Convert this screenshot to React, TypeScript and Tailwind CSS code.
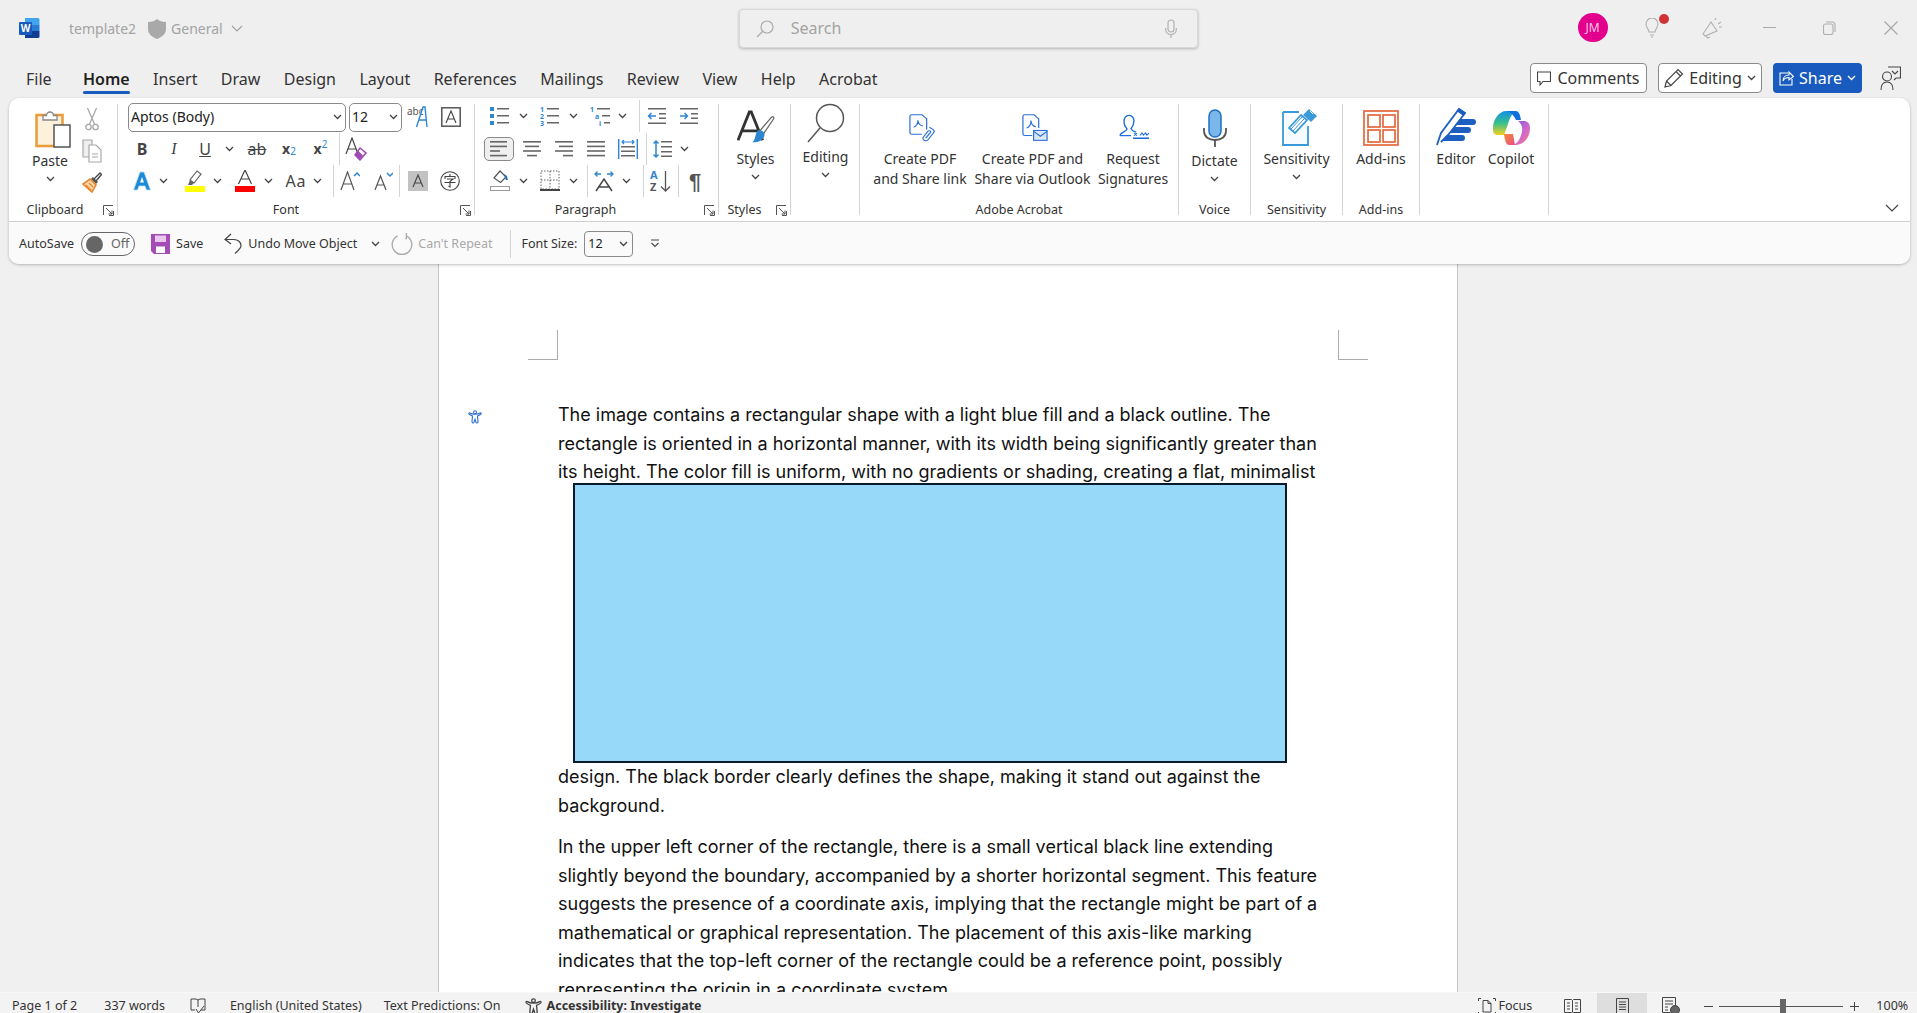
import React from "react";

const Chev = ({ c = "#444" }: { c?: string }) => (
  <svg width="9" height="6" viewBox="0 0 9 6" fill="none" stroke={c} strokeWidth="1.3"><path d="M1 1l3.500 3.500L8 1" /></svg>
);

const Launcher = () => (
  <svg width="11" height="11" viewBox="0 0 11 11" fill="none" stroke="#555" strokeWidth="1"><path d="M.5 10V.5H10M10.500 6v4.500H6M3 3l6 6M9 5.500V9H5.500" /></svg>
);

const Lines = ({ rows }: { rows: [number, number][] }) => (
  <>{rows.map(([x, w], i) => <rect key={i} x={x} y={3 + i * 4.6} width={w} height="1.6" fill="#666" />)}</>
);

const Align = ({ rows }: { rows: [number, number][] }) => (
  <svg width="20" height="22" viewBox="0 0 20 22"><Lines rows={rows} /></svg>
);

function Bullets() {
  return (
    <svg width="20" height="20" viewBox="0 0 20 20">
      <path d="M0 1h4v4H0zM0 8h4v4H0zM0 15h4v4H0z" fill="#2e86d0" />
      <path d="M7 2h12v1.500H7zM7 9h12v1.500H7zM7 16h12v1.500H7z" fill="#666" />
    </svg>
  );
}

function Numbered() {
  return (
    <svg width="20" height="22" viewBox="0 0 20 22">
      <text x="0" y="7" fontSize="7" fontWeight="700" fill="#2e86d0">1</text>
      <text x="0" y="14" fontSize="7" fontWeight="700" fill="#2e86d0">2</text>
      <text x="0" y="21" fontSize="7" fontWeight="700" fill="#2e86d0">3</text>
      <path d="M7 3h12v1.500H7zM7 10h12v1.500H7zM7 17h12v1.500H7z" fill="#666" />
    </svg>
  );
}

function Multilevel() {
  return (
    <svg width="22" height="22" viewBox="0 0 22 22">
      <text x="0" y="7" fontSize="7" fontWeight="700" fill="#2e86d0">1</text>
      <text x="5" y="14" fontSize="7" fontWeight="700" fill="#2e86d0">a</text>
      <text x="9" y="21" fontSize="7" fontWeight="700" fill="#2e86d0">i</text>
      <path d="M7 3h13v1.500H7zM12 10h8v1.500h-8zM14 17h6v1.500h-6z" fill="#666" />
    </svg>
  );
}

function Indent({ flip }: { flip?: boolean }) {
  return (
    <svg width="20" height="20" viewBox="0 0 20 20">
      <path d="M1 2h18v1.500H1zM1 16.500h18v1.500H1zM12 7h7v1.500h-7zM12 11.500h7V13h-7z" fill="#666" />
      <path d={flip ? "M1 10h7M5.500 7l3 3-3 3" : "M9 10H2M4.500 7l-3 3 3 3"} stroke="#2e86d0" strokeWidth="1.500" fill="none" />
    </svg>
  );
}

function Distributed() {
  return (
    <svg width="20" height="22" viewBox="0 0 20 22">
      <path d="M.7 1v20M19.300 1v20" stroke="#2e86d0" strokeWidth="1.400" />
      <path d="M4 4h12M6 2L4 4l2 2M14 2l2 2-2 2" stroke="#2e86d0" strokeWidth="1.200" fill="none" />
      <path d="M3 8h14v1.500H3zM3 12.500h14V14H3zM3 17h14v1.500H3z" fill="#666" />
    </svg>
  );
}

function LineSpacing() {
  return (
    <svg width="20" height="20" viewBox="0 0 20 20">
      <path d="M3 2v16M.5 4.500L3 2l2.500 2.500M.5 15.500L3 18l2.500-2.500" stroke="#2e86d0" strokeWidth="1.500" fill="none" />
      <path d="M8 2h11v1.500H8zM8 7h11v1.500H8zM8 12h11v1.500H8zM8 16.500h11V18H8z" fill="#666" />
    </svg>
  );
}

function Shading() {
  return (
    <svg width="20" height="22" viewBox="0 0 20 22" fill="none">
      <path d="M10 1l6 6-5.500 5.500L4 8z" stroke="#555" strokeWidth="1.200" fill="#fff" />
      <path d="M14 4l3 2 .8 4h-2z" fill="#1f6cb5" />
      <rect x=".5" y="16.500" width="19" height="4" stroke="#999" fill="#fff" />
    </svg>
  );
}

function Borders() {
  return (
    <svg width="20" height="22" viewBox="0 0 20 22" fill="none">
      <path d="M1 1h18v18H1zM10 1v18M1 10h18" stroke="#666" strokeDasharray="1.500 1.500" />
      <path d="M0 20h20" stroke="#444" strokeWidth="2" />
    </svg>
  );
}

function TextDir() {
  return (
    <svg width="20" height="22" viewBox="0 0 20 22" fill="none">
      <path d="M1 4h6M3.500 1.500L1 4l2.500 2.500M13 4h6M16.500 1.500L19 4l-2.500 2.500" stroke="#2e86d0" strokeWidth="1.300" />
      <path d="M2 21l8-12 8 12M5 17h10" stroke="#444" strokeWidth="1.500" />
    </svg>
  );
}

function SortAZ() {
  return (
    <svg width="22" height="24" viewBox="0 0 22 24">
      <text x="0" y="10" fontSize="11" fontWeight="700" fill="#2e86d0">A</text>
      <text x="0" y="22" fontSize="11" fontWeight="700" fill="#555">Z</text>
      <path d="M15.500 2v20M11 17.500l4.500 4.500 4.500-4.500" stroke="#555" strokeWidth="1.300" fill="none" />
    </svg>
  );
}

function PasteIcon() {
  return (
    <svg width="36" height="40" viewBox="0 0 36 40" fill="none">
      <rect x="1.500" y="7" width="26" height="31" fill="#fdf1dc" stroke="#ea9a36" strokeWidth="2.500" />
      <path d="M8 7.500h3.500a3.500 3.500 0 017 0H22V12H8z" fill="#fff" stroke="#888" strokeWidth="1.300" />
      <rect x="19" y="17" width="16" height="22" fill="#fff" stroke="#555" strokeWidth="1.500" />
    </svg>
  );
}

function CutIcon() {
  return (
    <svg width="14" height="24" viewBox="0 0 14 24" fill="none" stroke="#a8a8a8" strokeWidth="1.300">
      <path d="M2.500 1l7 16M11.500 1l-7 16" />
      <circle cx="3.500" cy="20" r="2.700" />
      <circle cx="10.500" cy="20" r="2.700" />
    </svg>
  );
}

function CopyIcon() {
  return (
    <svg width="20" height="24" viewBox="0 0 20 24" fill="none" stroke="#a8a8a8" strokeWidth="1.200">
      <path d="M1 1h9v17H1z" fill="#efefef" />
      <path d="M7 6h7l5 5v12H7z" fill="#fff" />
      <path d="M10 15h6M10 18h6" />
    </svg>
  );
}

function BrushIcon() {
  return (
    <svg width="20" height="22" viewBox="0 0 20 22" fill="none">
      <path d="M12 8l6-6 1.500 1.500-5.500 6.500" fill="#fff" stroke="#444" strokeWidth="1.300" />
      <path d="M11 6l5 5-2 2-5-5z" fill="#555" />
      <path d="M8 8l6 6-4 7-9-8z" fill="#f6d7b0" stroke="#e8862a" strokeWidth="1.600" />
      <path d="M4 14l5 5M7 12l4 4" stroke="#e8862a" strokeWidth="1.300" />
    </svg>
  );
}

function TextEffectA() {
  return (
    <svg width="20" height="20" viewBox="0 0 20 20" fill="none">
      <path d="M1.500 19L8 1h4l6.500 18h-4L13 15H7l-1.500 4z" fill="#1c8ad6" stroke="#b8dcf3" strokeWidth=".8" />
      <path d="M8 11.500h4L10 6z" fill="#fff" />
    </svg>
  );
}

function HighlightIcon() {
  return (
    <svg width="20" height="22" viewBox="0 0 20 22" fill="none">
      <path d="M12 1l4 3-7 9-4-3z" fill="#fff" stroke="#666" strokeWidth="1.200" />
      <path d="M5 10l4 3-2 2H3z" fill="#666" />
      <rect x="0" y="16" width="20" height="6" fill="#ffff00" />
    </svg>
  );
}

function FontColorIcon() {
  return (
    <svg width="20" height="22" viewBox="0 0 20 22" fill="none">
      <path d="M3.500 14L10 0l6.500 14M6 9h8" stroke="#444" strokeWidth="1.200" />
      <rect x="0" y="16" width="20" height="6" fill="#f00" />
    </svg>
  );
}

function ClearFormat() {
  return (
    <svg width="22" height="24" viewBox="0 0 22 24" fill="none">
      <path d="M1 17L7 1l6 16M3 12h8" stroke="#444" strokeWidth="1.200" />
      <path d="M15 11l6 5-6 7-5-5z" fill="#fff" stroke="#a04ab3" strokeWidth="1.500" />
      <path d="M13 13.500l5 5-3 4-5-4.500z" fill="#a04ab3" />
    </svg>
  );
}

function GrowFont({ up }: { up?: boolean }) {
  return (
    <svg width="20" height="20" viewBox="0 0 20 20" fill="none">
      <path d={up ? "M1 19L7.500 1 14 19M3.500 13h8" : "M2 19L7.500 5 13 19M4 14h7"} stroke="#555" strokeWidth="1.200" />
      <path d={up ? "M14 5l3-3 3 3" : "M14 2l3 3 3-3"} stroke="#2e86d0" strokeWidth="1.500" />
    </svg>
  );
}

function AbcA() {
  return (
    <svg width="22" height="24" viewBox="0 0 22 24" fill="none">
      <text x="0" y="10" fontSize="10" fill="#555" fontFamily="Noto Sans">abc</text>
      <path d="M9.500 22L16 2h2l2 20M12 15h7" stroke="#2e86d0" strokeWidth="1.400" />
    </svg>
  );
}

function BoxA() {
  return (
    <svg width="20" height="20" viewBox="0 0 20 20" fill="none">
      <rect x=".8" y=".8" width="18.400" height="18.400" stroke="#555" strokeWidth="1.500" />
      <path d="M5 16l5-12 5 12M6.500 12h7" stroke="#444" strokeWidth="1.100" />
    </svg>
  );
}

function CharShade() {
  return (
    <svg width="20" height="20" viewBox="0 0 20 20" fill="none">
      <rect width="20" height="20" fill="#c2c2c2" />
      <path d="M5 16l5-12 5 12M6.500 12h7" stroke="#444" strokeWidth="1.100" />
    </svg>
  );
}

function CharBorder() {
  return (
    <svg width="20" height="20" viewBox="0 0 20 20" fill="none" stroke="#444" strokeWidth="1.100">
      <circle cx="10" cy="10" r="9.300" />
      <path d="M10 3v2M5 8V5.500h10V8M7 8h6l-3 2.500V16l-1.500-1M4.500 11.500h11" />
    </svg>
  );
}

function StylesIcon() {
  return (
    <svg width="38" height="36" viewBox="0 0 40 38" fill="none">
      <path d="M1 32L13 2h2l12 30M6 22h16" stroke="#333" strokeWidth="3" />
      <path d="M24 22L36 8c2-2 3.500-.5 2.500 1.500L28 25" fill="#fff" stroke="#666" strokeWidth="1.300" />
      <path d="M23 21c3 0 6 2 6 5 0 5-7 9-13 8 4-2 3-12 7-13z" fill="#2e86d0" />
    </svg>
  );
}

function EditingIcon() {
  return (
    <svg width="38" height="41" viewBox="0 0 38 41" fill="none">
      <circle cx="23" cy="15" r="13.500" stroke="#555" strokeWidth="1.500" />
      <path d="M13 25L1 39" stroke="#555" strokeWidth="1.500" />
    </svg>
  );
}

function PdfLink() {
  return (
    <svg className="mb-[4px] ml-[3px]" width="26" height="28" viewBox="0 0 28 36" preserveAspectRatio="none" fill="none" stroke="#2a6fdb" strokeWidth="1.300">
      <path d="M19 20V6l-5-5H3a2 2 0 00-2 2v21a2 2 0 002 2h11" />
      <path d="M5 17c3-1 5-5 4.500-9 .5 4 3 7 5.500 7.500" />
      <path d="M22 17l4 3a3 3 0 01.500 4l-6 9a3 3 0 01-5-3.500l5-7.500a1.500 1.500 0 012.500 2l-5 7" />
    </svg>
  );
}

function PdfMail() {
  return (
    <svg className="mb-[4px] ml-[4px]" width="26" height="28" viewBox="0 0 28 34" preserveAspectRatio="none" fill="none" stroke="#2a6fdb" strokeWidth="1.300">
      <path d="M18 17V6l-5-5H3a2 2 0 00-2 2v21a2 2 0 002 2h8" />
      <path d="M5 17c3-1 5-5 4.500-9 .5 4 3 7 5.500 7.500" />
      <rect x="12.500" y="20" width="14.500" height="12" fill="#dbe8fa" />
      <path d="M12.500 21l7.300 6 7.200-6" />
    </svg>
  );
}

function SignIcon() {
  return (
    <svg className="mb-[6px] ml-[3px]" width="32" height="29" viewBox="0 0 32 33" preserveAspectRatio="none" fill="none" stroke="#1d6fd8" strokeWidth="1.400">
      <path d="M1 28c0-4 7-4 7-8-3-3-3-6-3-9 0-4 3-6 5-6s5 2 5 6c0 3-1 6-3 9 1 3 3 3 5 4" />
      <path d="M1 28h11" />
      <path d="M15 25l3 3M18 25l-3 3M21 28l2-3 1.500 2.500 2-2.500 1.500 2.500 2-2.500" strokeWidth="1.100" />
      <path d="M14 31h16" strokeWidth="1.800" />
    </svg>
  );
}

function MicBig() {
  return (
    <svg width="24" height="39" viewBox="0 0 24 39" fill="none">
      <rect x="6" y="1" width="12" height="27" rx="6" fill="#7ab8ec" stroke="#1f6fc4" strokeWidth="1.500" />
      <path d="M1 19v3c0 6 5 9 11 9s11-3 11-9v-3" stroke="#555" strokeWidth="1.800" />
      <path d="M12 31v7" stroke="#555" strokeWidth="1.800" />
    </svg>
  );
}

function SensitivityIcon() {
  return (
    <svg className="ml-[6px]" width="36" height="38" viewBox="0 0 36 38" fill="none">
      <path d="M1 4h16M1 4v33h25V18" stroke="#3a9ad9" strokeWidth="1.800" fill="#f5fbff" />
      <path d="M7 20l12-13 6 5-12 13z" fill="#fff" stroke="#3a9ad9" strokeWidth="1.800" />
      <path d="M9 21L20 9M11 23l11-12" stroke="#3a9ad9" />
      <path d="M21 7l6-6 8 7-6 6z" fill="#3a9ad9" />
      <path d="M28 3l3 3" stroke="#fff" />
    </svg>
  );
}

function AddinsIcon() {
  return (
    <svg width="36" height="36" viewBox="0 0 36 36" fill="none" stroke="#e2683c" strokeWidth="1.700">
      <rect x="1" y="1" width="34" height="34" />
      <rect x="5" y="5" width="12" height="12" />
      <rect x="20" y="5" width="12" height="12" />
      <rect x="5" y="20" width="12" height="12" />
      <rect x="20" y="20" width="12" height="12" />
    </svg>
  );
}

function EditorIcon() {
  return (
    <svg width="40" height="39" viewBox="0 0 40 39" fill="none">
      <path d="M1 38l4-12L23 2l6 4-6 8-10 13-8 8" fill="#fff" stroke="#1d5fc0" strokeWidth="1.800" />
      <path d="M23 1l7 5-2.500 3-7-5z" fill="#1d5fc0" />
      <path d="M24 12h13a2.500 2.500 0 010 6H19zM18 20h14a2.500 2.500 0 010 6H13zM12 28h14a2.500 2.500 0 010 6H6z" fill="#1d5fc0" />
    </svg>
  );
}

function CopilotIcon() {
  return (
    <svg width="38" height="36" viewBox="0 0 38 36">
      <defs>
        <linearGradient id="cpa" x1="0" y1="0" x2="0" y2="1">
          <stop offset="0" stopColor="#1190e8" />
          <stop offset=".5" stopColor="#35c08c" />
          <stop offset="1" stopColor="#f5d020" />
        </linearGradient>
        <linearGradient id="cpb" x1="0" y1="0" x2="1" y2="1">
          <stop offset="0" stopColor="#6b5be6" />
          <stop offset=".6" stopColor="#d768c8" />
          <stop offset="1" stopColor="#f0826a" />
        </linearGradient>
        <linearGradient id="cpc" x1="0" y1="0" x2="1" y2="1">
          <stop offset="0" stopColor="#f58a2c" />
          <stop offset="1" stopColor="#ea4d8b" />
        </linearGradient>
      </defs>
      <path d="M1 20C0 9 8 1 14 1h12c-6 1-8 6-11 16l-3 8H6c-3 0-5-2-5-5z" fill="url(#cpa)" />
      <path d="M15 1h8c4 0 5 3 6 9h-5c-2-4-5-8-9-9z" fill="#1270dc" />
      <path d="M26 11h6c3 0 6 2 6 7 0 10-7 17-14 17h-4c6-1 8-6 10-13 1-5-1-9-4-11z" fill="url(#cpb)" />
      <path d="M12 24h9l2 11h-6c-3 0-4-4-5-11z" fill="url(#cpc)" />
    </svg>
  );
}

function WordLogo() {
  return (
    <svg width="21" height="20" viewBox="0 0 21 20">
      <path d="M6 0h13a1.500 1.500 0 011.500 1.500V7H6z" fill="#41a5ee" />
      <path d="M6 7h14.500v6H6z" fill="#2b7cd3" />
      <path d="M6 13h14.500v5.500A1.500 1.500 0 0119 20H6z" fill="#103f91" />
      <rect x="0" y="4" width="13" height="13" rx="1" fill="#185abd" />
      <text x="6.500" y="14" textAnchor="middle" fontSize="10" fontWeight="700" fill="#fff" fontFamily="Noto Sans">W</text>
    </svg>
  );
}

function AccessIcon({ size = 14, c = "#2a6fd0" }: { size?: number; c?: string }) {
  return (
    <svg width={size} height={size} viewBox="0 0 14 14" fill="none" stroke={c} strokeWidth="1.100">
      <circle cx="7" cy="2.200" r="1.500" />
      <path d="M1 4c1 1 3 1.800 3.500 2L4 11.500c0 1.500 1.500 2 2 .7l1-3 1 3c.5 1.300 2 .8 2-.7L9.500 6c.5-.2 2.500-1 3.500-2 .5-1-.5-1.500-1-1-1 .8-3 1.200-5 1.200S3 3.800 2 3c-.5-.5-1.500 0-1 1z" />
    </svg>
  );
}

const Sep = ({ cls }: { cls: string }) => <div className={`w-px bg-[#d4d4d4] ${cls}`} />;

const Cell = ({ cls, children }: { cls: string; children?: React.ReactNode }) => (
  <div className={`flex h-full shrink-0 items-center justify-center ${cls}`}>{children}</div>
);

const CellChev = ({ cls }: { cls: string }) => (
  <Cell cls={cls}>
    <span className="shrink-0"><Chev /></span>
  </Cell>
);

function Group({ cls, label, labelCls = "", launcher, children }: { cls: string; label: string; labelCls?: string; launcher?: boolean; children: React.ReactNode }) {
  return (
    <div className={`relative flex h-full shrink-0 flex-col border-r border-[#d4d4d4] ${cls}`}>
      <div className="min-h-0 flex-1">{children}</div>
      <div className={`flex h-[14px] translate-y-[2px] items-center justify-center whitespace-nowrap text-[12.500px] leading-none text-[#333] ${labelCls}`}>{label}</div>
      {launcher && <span className="absolute -bottom-px right-[3px] flex h-[11px]"><Launcher /></span>}
    </div>
  );
}

function BigBtn({ icon, lines, chev, iconCls = "h-[45px]", cls = "" }: { icon: React.ReactNode; lines: string[]; chev?: boolean; iconCls?: string; cls?: string }) {
  return (
    <div className={`flex shrink-0 flex-col items-center ${cls}`}>
      <div className={`flex items-end pb-[3px] ${iconCls}`}>{icon}</div>
      {lines.map((l) => (
        <div key={l} className="whitespace-nowrap text-sm leading-[20px] text-[#333]">{l}</div>
      ))}
      {chev && <div className="flex h-4 items-center"><Chev /></div>}
    </div>
  );
}

const tabs = ["File", "Home", "Insert", "Draw", "Design", "Layout", "References", "Mailings", "Review", "View", "Help", "Acrobat"];

function TitleBar() {
  return (
    <div className="flex h-[60px] items-center pb-[3px]">
      <div className="ml-[19px] mb-[2px]"><WordLogo /></div>
      <span className="ml-[29px] text-sm text-[#a3a3a3]">template2</span>
      <svg className="ml-[12px]" width="18" height="20" viewBox="0 0 18 20"><path d="M9 0c2 2 5 3 9 3v7c0 5-4 8-9 10-5-2-9-5-9-10V3c4 0 7-1 9-3z" fill="#a9a9a9" /></svg>
      <span className="ml-[5px] text-sm text-[#a3a3a3]">General</span>
      <span className="ml-[8px]"><svg width="12" height="7" viewBox="0 0 12 7" fill="none" stroke="#a3a3a3" strokeWidth="1.200"><path d="M1 1l5 5 5-5" /></svg></span>

      <div className="ml-[496px] flex h-[39px] w-[459px] items-center rounded-[4px] border border-[#d8d8d8] bg-[#efefef] pl-[16px] pr-[20px] shadow-[0_1px_3px_rgba(0,0,0,0.25)]">
        <svg width="18" height="18" viewBox="0 0 18 18" fill="none" stroke="#ababab" strokeWidth="1.200"><circle cx="11" cy="7" r="6" /><path d="M6.500 11.500L1 17" /></svg>
        <span className="mb-[2px] ml-[17px] flex-1 text-base text-[#a3a3a3]">Search</span>
        <svg width="12" height="20" viewBox="0 0 12 20" fill="none" stroke="#b0b0b0" strokeWidth="1.200"><rect x="3" y="1" width="6" height="12" rx="3" /><path d="M.7 9v1.500c0 3 2.300 5 5.300 5s5.300-2 5.300-5V9M6 15.500V19" /></svg>
      </div>

      <div className="ml-[380px] mb-[2px] flex h-[29px] w-[30px] items-center justify-center rounded-full bg-[#e3008c] text-xs text-[#f8c6e4]">JM</div>
      <div className="relative ml-[37px] mb-[2px]">
        <svg width="14" height="20" viewBox="0 0 14 20" fill="none" stroke="#b0b0b0" strokeWidth="1.100"><path d="M4 14c0-3-3-4-3-8a6 6 0 0112 0c0 4-3 5-3 8zM5 17h4M6 19h2" /></svg>
        <span className="absolute -right-[10px] -top-[4px] h-[10px] w-[10px] rounded-full bg-[#d13438]" />
      </div>
      <svg className="ml-[43px] mb-[2px]" width="20" height="22" viewBox="0 0 20 22" fill="none" stroke="#b0b0b0" strokeWidth="1.100"><path d="M1 17L9 5l6 9-12 5zM4 19l1.500 2 2.500-1M13 3l1-2M16 7l3-2M17 10h3" /></svg>
      <div className="ml-[41px] mb-[2px] h-px w-[13px] bg-[#a8a8a8]" />
      <svg className="ml-[47px] mb-[2px]" width="13" height="14" viewBox="0 0 13 14" fill="none" stroke="#b0b0b0" strokeWidth="1.100"><rect x=".5" y="3" width="9.500" height="10.500" rx="2" /><path d="M3 1h6a3 3 0 013 3v7" /></svg>
      <svg className="ml-[48px] mb-[2px]" width="14" height="14" viewBox="0 0 14 14" fill="none" stroke="#a8a8a8" strokeWidth="1.200"><path d="M.5.500l13 13M13.500.500l-13 13" /></svg>
    </div>
  );
}

function TabRow() {
  return (
    <div className="flex h-[38px] items-start">
      <div className="ml-[26px] flex gap-[23.400px]">
        {tabs.map((t) => (
          <div key={t} className={`relative flex h-[38px] items-center pb-[1px] text-base ${t === "Home" ? "ml-[8px] font-semibold text-[#1f1f1f]" : "text-[#333]"}`}>
            {t}
            {t === "Home" && <span className="absolute bottom-[4px] left-0 right-0 h-[3px] rounded-sm bg-[#185abd]" />}
          </div>
        ))}
      </div>
      <div className="ml-auto mt-[3px] flex items-center gap-[11px] pr-[16px]">
        <div className="flex h-[30px] w-[117px] items-center justify-center gap-[6px] rounded-[4px] border border-[#8a8a8a] bg-white text-base text-[#333]">
          <svg width="14" height="15" viewBox="0 0 14 15" fill="none" stroke="#444" strokeWidth="1.100"><path d="M.5 1h13v9.500H6L3 14v-3.500H.5z" /></svg>
          Comments
        </div>
        <div className="flex h-[30px] w-[104px] items-center justify-center gap-[5px] rounded-[4px] border border-[#8a8a8a] bg-white text-base text-[#333]">
          <svg width="20" height="20" viewBox="0 0 20 20" fill="none" stroke="#444" strokeWidth="1.200"><path d="M1 19l1.500-6L14 1.500l4.500 4.500L7 17.500zM2.500 13L7 17.500M12 3.500L16.500 8" /></svg>
          Editing
          <Chev />
        </div>
        <div className="flex h-[30px] w-[89px] items-center justify-center gap-[5px] rounded-[4px] bg-[#185abd] text-base text-white">
          <svg width="15" height="16" viewBox="0 0 15 16" fill="none" stroke="#fff" strokeWidth="1.100"><path d="M9 3H1v12h12V9M4 11c0-4 3-6 6-6V2l4.500 4.500L10 10V7.500c-3 0-5 1-6 3.500z" /></svg>
          Share
          <Chev c="#fff" />
        </div>
        <svg className="ml-[7px]" width="21" height="25" viewBox="0 0 21 25" fill="none" stroke="#444" strokeWidth="1.100"><path d="M8 1h12.500v11H16l-2 2M1 24c0-5 2-8 6-8s6 3 6 8" /><circle cx="7" cy="10.500" r="4.500" /><path d="M12 5l3 3 3-3" /></svg>
      </div>
    </div>
  );
}

function Ribbon() {
  return (
    <div className="flex h-[117px] items-start pt-[6px]">
      <Group cls="w-[109px]" label="Clipboard" labelCls="pr-[16px]" launcher>
        <div className="flex h-full">
          <BigBtn cls="ml-[15px] w-[52px]" iconCls="h-[47px] pl-[6px]" icon={<PasteIcon />} lines={["Paste"]} chev />
          <div className="flex w-[32px] flex-col items-center pt-[2px]">
            <div className="flex h-[26px] items-center"><CutIcon /></div>
            <div className="mt-[6px] flex h-[26px] items-center"><CopyIcon /></div>
            <div className="mt-[6px] flex h-[24px] items-center"><BrushIcon /></div>
          </div>
        </div>
      </Group>

      <Group cls="w-[357px]" label="Font" labelCls="pr-[20px]" launcher>
        <div className="flex flex-col gap-[8.500px] pl-[8px]">
          <div className="-mb-px mt-px flex h-6 items-center pl-[2px]">
            <div className="flex h-[29px] w-[218px] shrink-0 items-center justify-between rounded-[5px] border border-[#8a8a8a] pl-[2px] pr-[3px] text-sm text-[#222]">Aptos (Body)<Chev /></div>
            <div className="ml-[3px] flex h-[29px] w-[53px] shrink-0 items-center justify-between rounded-[5px] border border-[#8a8a8a] pl-[2px] pr-[3px] text-sm text-[#222]">12<Chev /></div>
            <Cell cls="w-[32px]"><AbcA /></Cell>
            <Cell cls="ml-[1px] w-[32px]"><BoxA /></Cell>
          </div>
          <div className="flex h-6 items-center text-[#444]">
            <Cell cls="w-[32px] text-base font-bold">B</Cell>
            <Cell cls="w-[32px] font-['Liberation_Serif'] text-base italic">I</Cell>
            <Cell cls="w-[30px] text-base underline">U</Cell>
            <CellChev cls="w-[18px]" />
            <Cell cls="w-[38px] text-base line-through">ab</Cell>
            <Cell cls="w-[26px] text-sm font-bold">x<sub className="text-[10px] font-normal text-[#2e86d0]">2</sub></Cell>
            <Cell cls="w-[37px] text-sm font-bold">x<sup className="text-[10px] font-normal text-[#2e86d0]">2</sup></Cell>
            <Sep cls="h-[32px] shrink-0" />
            <Cell cls="w-[32px]"><ClearFormat /></Cell>
          </div>
          <div className="flex h-6 items-center">
            <Cell cls="w-[32px]"><TextEffectA /></Cell>
            <CellChev cls="w-[10px]" />
            <Cell cls="ml-[11px] w-[32px]"><HighlightIcon /></Cell>
            <CellChev cls="w-[12px]" />
            <Cell cls="ml-[6px] w-[32px]"><FontColorIcon /></Cell>
            <CellChev cls="w-[14px]" />
            <Cell cls="ml-[4px] w-[34px] text-base tracking-[1px] text-[#444]">Aa</Cell>
            <CellChev cls="w-[8px]" />
            <div className="w-[12px] shrink-0" />
            <Sep cls="h-[32px] shrink-0" />
            <Cell cls="w-[32px]"><GrowFont up /></Cell>
            <Cell cls="ml-px w-[32px]"><GrowFont /></Cell>
            <Sep cls="h-[32px] shrink-0" />
            <Cell cls="ml-[2px] w-[32px]"><CharShade /></Cell>
            <Cell cls="w-[32px]"><CharBorder /></Cell>
          </div>
        </div>
      </Group>

      <Group cls="w-[244px]" label="Paragraph" labelCls="pr-[22px]" launcher>
        <div className="flex flex-col gap-[8.500px] pl-[9px]">
          <div className="flex h-6 items-center">
            <Cell cls="w-[32px]"><Bullets /></Cell>
            <CellChev cls="w-[14px]" />
            <Cell cls="ml-[4px] w-[32px]"><Numbered /></Cell>
            <CellChev cls="w-[14px]" />
            <Cell cls="ml-[5px] w-[32px]"><Multilevel /></Cell>
            <CellChev cls="w-[10px]" />
            <div className="w-[12px] shrink-0" />
            <Sep cls="h-[32px] shrink-0" />
            <Cell cls="ml-px w-[32px]"><Indent /></Cell>
            <Cell cls="w-[32px]"><Indent flip /></Cell>
          </div>
          <div className="flex h-6 items-center">
            <Cell cls="h-[30px] w-[30px] rounded-[5px] border border-[#8a8a8a] bg-[#efefef]"><Align rows={[[1, 17], [1, 17], [1, 10], [1, 17]]} /></Cell>
            <Cell cls="ml-[2px] w-[32px]"><Align rows={[[1, 18], [3, 14], [1, 18], [5, 10]]} /></Cell>
            <Cell cls="w-[32px]"><Align rows={[[1, 18], [5, 14], [1, 18], [9, 10]]} /></Cell>
            <Cell cls="w-[32px]"><Align rows={[[1, 18], [1, 18], [1, 18], [1, 18]]} /></Cell>
            <Cell cls="w-[32px]"><Distributed /></Cell>
            <div className="w-[2px] shrink-0" />
            <Sep cls="h-[32px] shrink-0" />
            <Cell cls="w-[32px]"><LineSpacing /></Cell>
            <CellChev cls="w-[10px]" />
          </div>
          <div className="flex h-6 items-center">
            <Cell cls="w-[32px]"><Shading /></Cell>
            <CellChev cls="w-[14px]" />
            <Cell cls="ml-[4px] w-[32px]"><Borders /></Cell>
            <CellChev cls="w-[14px]" />
            <div className="w-[7px] shrink-0" />
            <Sep cls="h-[32px] shrink-0" />
            <Cell cls="w-[32px]"><TextDir /></Cell>
            <CellChev cls="w-[12px]" />
            <div className="w-[11px] shrink-0" />
            <Sep cls="h-[32px] shrink-0" />
            <Cell cls="w-[34px]"><SortAZ /></Cell>
            <Sep cls="h-[32px] shrink-0" />
            <Cell cls="w-[32px] font-['Liberation_Sans'] text-[22px] font-bold text-[#555]">¶</Cell>
          </div>
        </div>
      </Group>

      <Group cls="w-[72px]" label="Styles" labelCls="pr-[20px]" launcher>
        <BigBtn cls="pl-[2px]" icon={<StylesIcon />} lines={["Styles"]} chev />
      </Group>
      <Group cls="w-[69px]" label="">
        <BigBtn cls="pl-px" iconCls="h-[43px]" icon={<EditingIcon />} lines={["Editing"]} chev />
      </Group>
      <Group cls="w-[319px]" label="Adobe Acrobat">
        <div className="flex pl-[5px]">
          <BigBtn cls="w-[110px]" icon={<PdfLink />} lines={["Create PDF", "and Share link"]} />
          <BigBtn cls="w-[115px]" icon={<PdfMail />} lines={["Create PDF and", "Share via Outlook"]} />
          <BigBtn cls="w-[86px]" icon={<SignIcon />} lines={["Request", "Signatures"]} />
        </div>
      </Group>
      <Group cls="w-[72px]" label="Voice">
        <BigBtn iconCls="h-[47px]" icon={<MicBig />} lines={["Dictate"]} chev />
      </Group>
      <Group cls="w-[92px]" label="Sensitivity">
        <BigBtn icon={<SensitivityIcon />} lines={["Sensitivity"]} chev />
      </Group>
      <Group cls="w-[77px]" label="Add-ins">
        <BigBtn icon={<AddinsIcon />} lines={["Add-ins"]} />
      </Group>
      <div className="flex h-full w-[129px] shrink-0 border-r border-[#d4d4d4] pl-[8px]">
        <BigBtn cls="w-[56px]" icon={<EditorIcon />} lines={["Editor"]} />
        <BigBtn cls="w-[54px]" icon={<CopilotIcon />} lines={["Copilot"]} />
      </div>
      <div className="ml-auto mr-[11px] self-end pb-[3px]">
        <svg width="14" height="8" viewBox="0 0 14 8" fill="none" stroke="#444" strokeWidth="1.200"><path d="M1 1l6 6 6-6" /></svg>
      </div>
    </div>
  );
}

function QuickAccess() {
  return (
    <div className="flex h-[43px] items-center rounded-b-[10px] border-t border-[#d0d0d0] bg-[#fafafa] pl-[10px] pt-[2px] text-[12.500px] text-[#333]">
      <span>AutoSave</span>
      <div className="ml-[7px] flex h-[24px] w-[54px] items-center rounded-full border border-[#666] pl-[4px]">
        <span className="h-[17px] w-[17px] rounded-full bg-[#666]" />
        <span className="ml-[8px] text-[#666]">Off</span>
      </div>
      <svg className="ml-[16px]" width="19" height="20" viewBox="0 0 19 20"><path d="M0 0h19v20H3l-3-3z" fill="#a54bb5" /><path d="M4 1.500h11V8H4z" fill="#e8c8ee" /><path d="M5 12.500h9V19H5z" fill="#fff" /></svg>
      <span className="ml-[6px]">Save</span>
      <svg className="ml-[21px]" width="18" height="22" viewBox="0 0 18 22" fill="none" stroke="#444" strokeWidth="1.200"><path d="M7 1L1 6.500 7 11M1 6.500h9c4 0 7 2.500 7 6 0 3-3 5-6 8" /></svg>
      <span className="ml-[6px]">Undo Move Object</span>
      <span className="ml-[14px]"><Chev /></span>
      <svg className="ml-[11px]" width="22" height="24" viewBox="0 0 20 22" fill="none" stroke="#aaa" strokeWidth="1.200"><path d="M6 3.500A9 9 0 1014 3.500M14 1v5h-1" /></svg>
      <span className="ml-[5px] text-[#a8a8a8]">Can't Repeat</span>
      <div className="ml-[18px] h-[28px] w-px bg-[#d4d4d4]" />
      <span className="ml-[10px]">Font Size:</span>
      <div className="ml-[7px] flex h-[26px] w-[49px] items-center justify-between rounded-[4px] border border-[#8a8a8a] pl-[3px] pr-[4px] text-[#222]">12<Chev /></div>
      <svg className="ml-[17px]" width="10" height="10" viewBox="0 0 10 10" fill="none" stroke="#444" strokeWidth="1.100"><path d="M1 1h8M1.500 4L5 7.500 8.500 4" /></svg>
    </div>
  );
}

const para1a = [
  "The image contains a rectangular shape with a light blue fill and a black outline. The",
  "rectangle is oriented in a horizontal manner, with its width being significantly greater than",
  "its height. The color fill is uniform, with no gradients or shading, creating a flat, minimalist",
];
const para1b = ["design. The black border clearly defines the shape, making it stand out against the", "background."];
const para2 = [
  "In the upper left corner of the rectangle, there is a small vertical black line extending",
  "slightly beyond the boundary, accompanied by a shorter horizontal segment. This feature",
  "suggests the presence of a coordinate axis, implying that the rectangle might be part of a",
  "mathematical or graphical representation. The placement of this axis-like marking",
  "indicates that the top-left corner of the rectangle could be a reference point, possibly",
  "representing the origin in a coordinate system.",
];

const TextLines = ({ lines }: { lines: string[] }) => (
  <>{lines.map((l) => <div key={l} className="whitespace-nowrap">{l}</div>)}</>
);

function Page() {
  return (
    <div className="min-h-0 flex-1 overflow-hidden bg-[#f0f0f0]">
      <div className="ml-[438px] h-full w-[1020px] border-x border-[#c6c6c6] bg-white">
        <div className="flex justify-between px-[89px] pt-[66px]">
          <div className="h-[30px] w-[30px] border-b border-r border-[#ababab]" />
          <div className="h-[30px] w-[30px] border-b border-l border-[#ababab]" />
        </div>
        <div className="relative mt-[41px] pl-[119px] font-['Inter',sans-serif] text-[18px] leading-[28.500px] text-[#111]">
          <span className="absolute left-[29px] top-[9px]"><AccessIcon /></span>
          <TextLines lines={para1a} />
          <div className="-mt-[3.500px] ml-[15px] h-[280px] w-[714px] border-2 border-[#0b1b2b] bg-[#97d9f8]" />
          <TextLines lines={para1b} />
          <div className="mt-[13px]"><TextLines lines={para2} /></div>
        </div>
      </div>
    </div>
  );
}

function StatusBar() {
  return (
    <div className="flex h-[21px] shrink-0 items-center border-t border-[#f8f8f8] bg-[#f3f3f3] pt-[6px] text-[12.500px] text-[#333]">
      <span className="ml-[12px]">Page 1 of 2</span>
      <span className="ml-[27px]">337 words</span>
      <svg className="ml-[25px]" width="16" height="17" viewBox="0 0 16 17" fill="none" stroke="#444" strokeWidth="1"><path d="M1 1h5l2 1 2-1h5v11h-4M8 2v7M1 1v11h4M6 11l2.500 4L14 8" /></svg>
      <span className="ml-[24px]">English (United States)</span>
      <span className="ml-[22px]">Text Predictions: On</span>
      <span className="ml-[24px]"><AccessIcon size={17} c="#444" /></span>
      <span className="ml-[5px] font-bold">Accessibility: Investigate</span>

      <svg className="ml-[776px]" width="18" height="17" viewBox="0 0 18 17" fill="none" stroke="#444" strokeWidth="1"><path d="M5 2.500h5l3 3V14H5zM10 2.500v3h3" /><path d="M3 .500H.5V3M15 .500h2.500V3M.5 14v2.500H3M17.500 14v2.500H15" /></svg>
      <span className="ml-[3px]">Focus</span>
      <svg className="ml-[32px]" width="17" height="17" viewBox="0 0 17 17" fill="none" stroke="#444" strokeWidth="1"><path d="M.5 1.500h7l1 1 1-1h7v13h-7l-1 1-1-1h-7zM8.500 2.500v12M3 5h3M3 8h3M3 11h3M11 5h3M11 8h3M11 11h3" /></svg>
      <div className="-mt-[6px] ml-[16px] flex h-[20px] w-[50px] items-center justify-center bg-[#dedede] pt-[6px]">
        <svg width="13" height="16" viewBox="0 0 13 16" fill="none" stroke="#444" strokeWidth="1"><path d="M.5.500h12v15H.5zM3 4h7M3 6.500h7M3 9h7M3 11.500h7" /></svg>
      </div>
      <svg className="ml-[15px]" width="18" height="18" viewBox="0 0 18 18" fill="none" stroke="#444" strokeWidth="1"><path d="M.5.500h13v8M.5.500v15h8M3 4h8M3 7h8M3 10h3M3 13h3" /><circle cx="13" cy="13" r="4.500" fill="#666" /></svg>
      <div className="ml-[24px] h-px w-[9px] bg-[#444]" />
      <div className="relative ml-[6px] h-px w-[124px] bg-[#555]">
        <span className="absolute -top-[7px] left-[61px] h-[15px] w-[6px] bg-[#666]" />
      </div>
      <span className="ml-[7px] flex h-[9px] w-[9px] items-center justify-center">
        <svg width="9" height="9" viewBox="0 0 9 9" stroke="#444"><path d="M0 4.500h9M4.500 0v9" /></svg>
      </span>
      <span className="ml-[17px]">100%</span>
    </div>
  );
}

export default function App() {
  return (
    <div className="flex h-[1013px] w-[1917px] flex-col overflow-hidden bg-[#efefef] font-['Noto_Sans',sans-serif]">
      <div className="relative z-10 h-[264px] shrink-0">
        <TitleBar />
        <TabRow />
        <div className="ml-[9px] mr-[7px] rounded-[10px] bg-white shadow-[0_1px_3px_rgba(0,0,0,0.25)]">
          <Ribbon />
          <div className="h-[6px]" />
          <QuickAccess />
        </div>
      </div>
      <Page />
      <StatusBar />
    </div>
  );
}
